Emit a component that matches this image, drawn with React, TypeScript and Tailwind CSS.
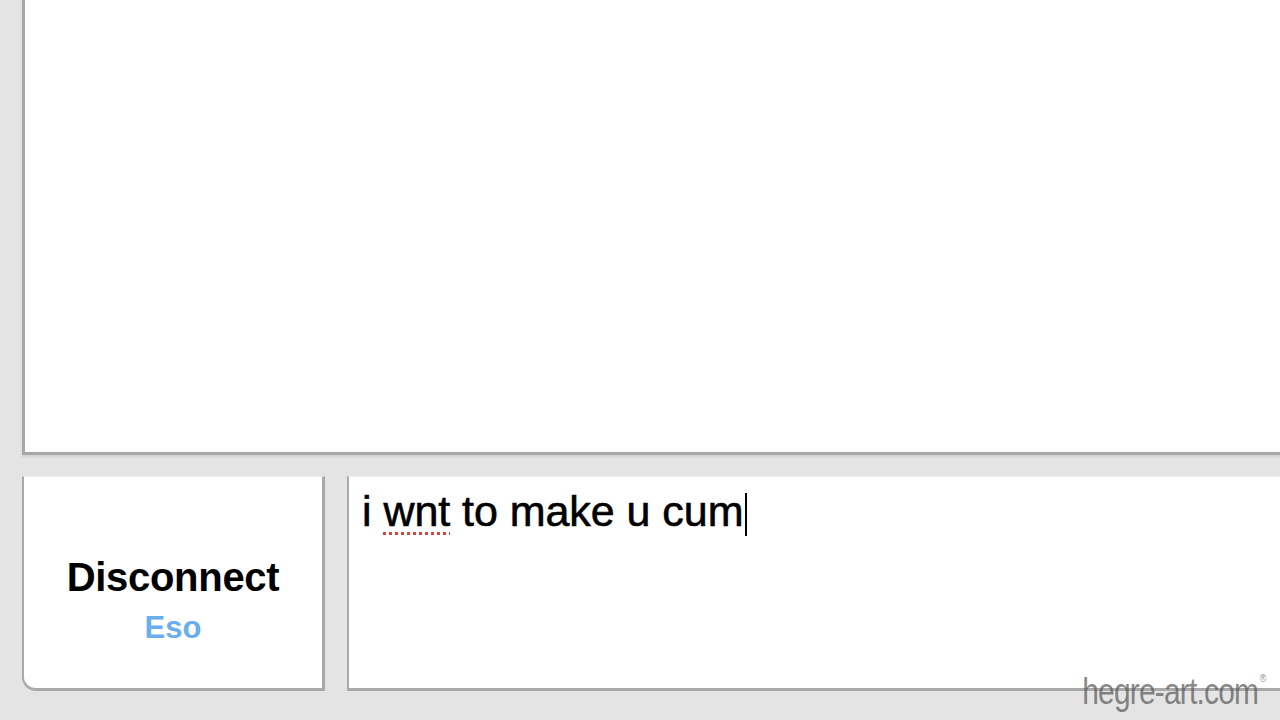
import React from "react";

export default function App() {
  return (
    <div className="relative w-[1280px] h-[720px] overflow-hidden bg-[#e4e4e4] pl-[22px] flex flex-col" style={{ fontFamily: '"Liberation Sans", Arial, sans-serif' }}>
      {/* chat log */}
      <div className="h-[455px] shrink-0 bg-white border-l-[3px] border-b-[3px] border-[#a8a8a8] shadow-[0_2px_2px_rgba(0,0,0,0.08)]" />
      {/* bottom row */}
      <div className="mt-[21px] h-[215px] shrink-0 flex gap-[22px]">
        <div className="w-[303px] shrink-0 bg-white border-l-[2px] border-r-[3px] border-b-[3px] border-t border-l-[#a9a9a9] border-r-[#a9a9a9] border-b-[#a9a9a9] border-t-[#ededed] rounded-bl-[14px] flex flex-col items-center justify-center pt-[34px]">
          <div className="text-[40px] leading-none font-bold text-black tracking-[-0.3px]">Disconnect</div>
          <div className="mt-[15px] text-[31px] leading-none font-bold text-[#6aaeee]">Eso</div>
        </div>
        <div className="flex-1 bg-white border-l-[2px] border-b-[3px] border-t border-l-[#a9a9a9] border-b-[#a9a9a9] border-t-[#ededed] pl-[13px] pt-[13px]">
          <div className="text-[43px] leading-none text-black tracking-[-0.05px] [-webkit-text-stroke:0.6px_#000] flex items-start">
            <span>i&nbsp;</span>
            <span className="underline decoration-dotted decoration-[#e04040] decoration-[3px] underline-offset-[6px]">wnt</span>
            <span>&nbsp;to make u cum</span>
            <span className="inline-block w-[2px] h-[43px] bg-black ml-[2px] mt-[3px]" />
          </div>
        </div>
      </div>
      {/* watermark */}
      <div className="absolute right-[14px] bottom-[10px] flex items-start text-[rgba(85,85,85,0.7)] origin-right scale-x-[0.81]">
        <span className="text-[37px] leading-none tracking-[-1px]">hegre-art.com</span>
        <span className="text-[11px] leading-none ml-[2px]">®</span>
      </div>
    </div>
  );
}
